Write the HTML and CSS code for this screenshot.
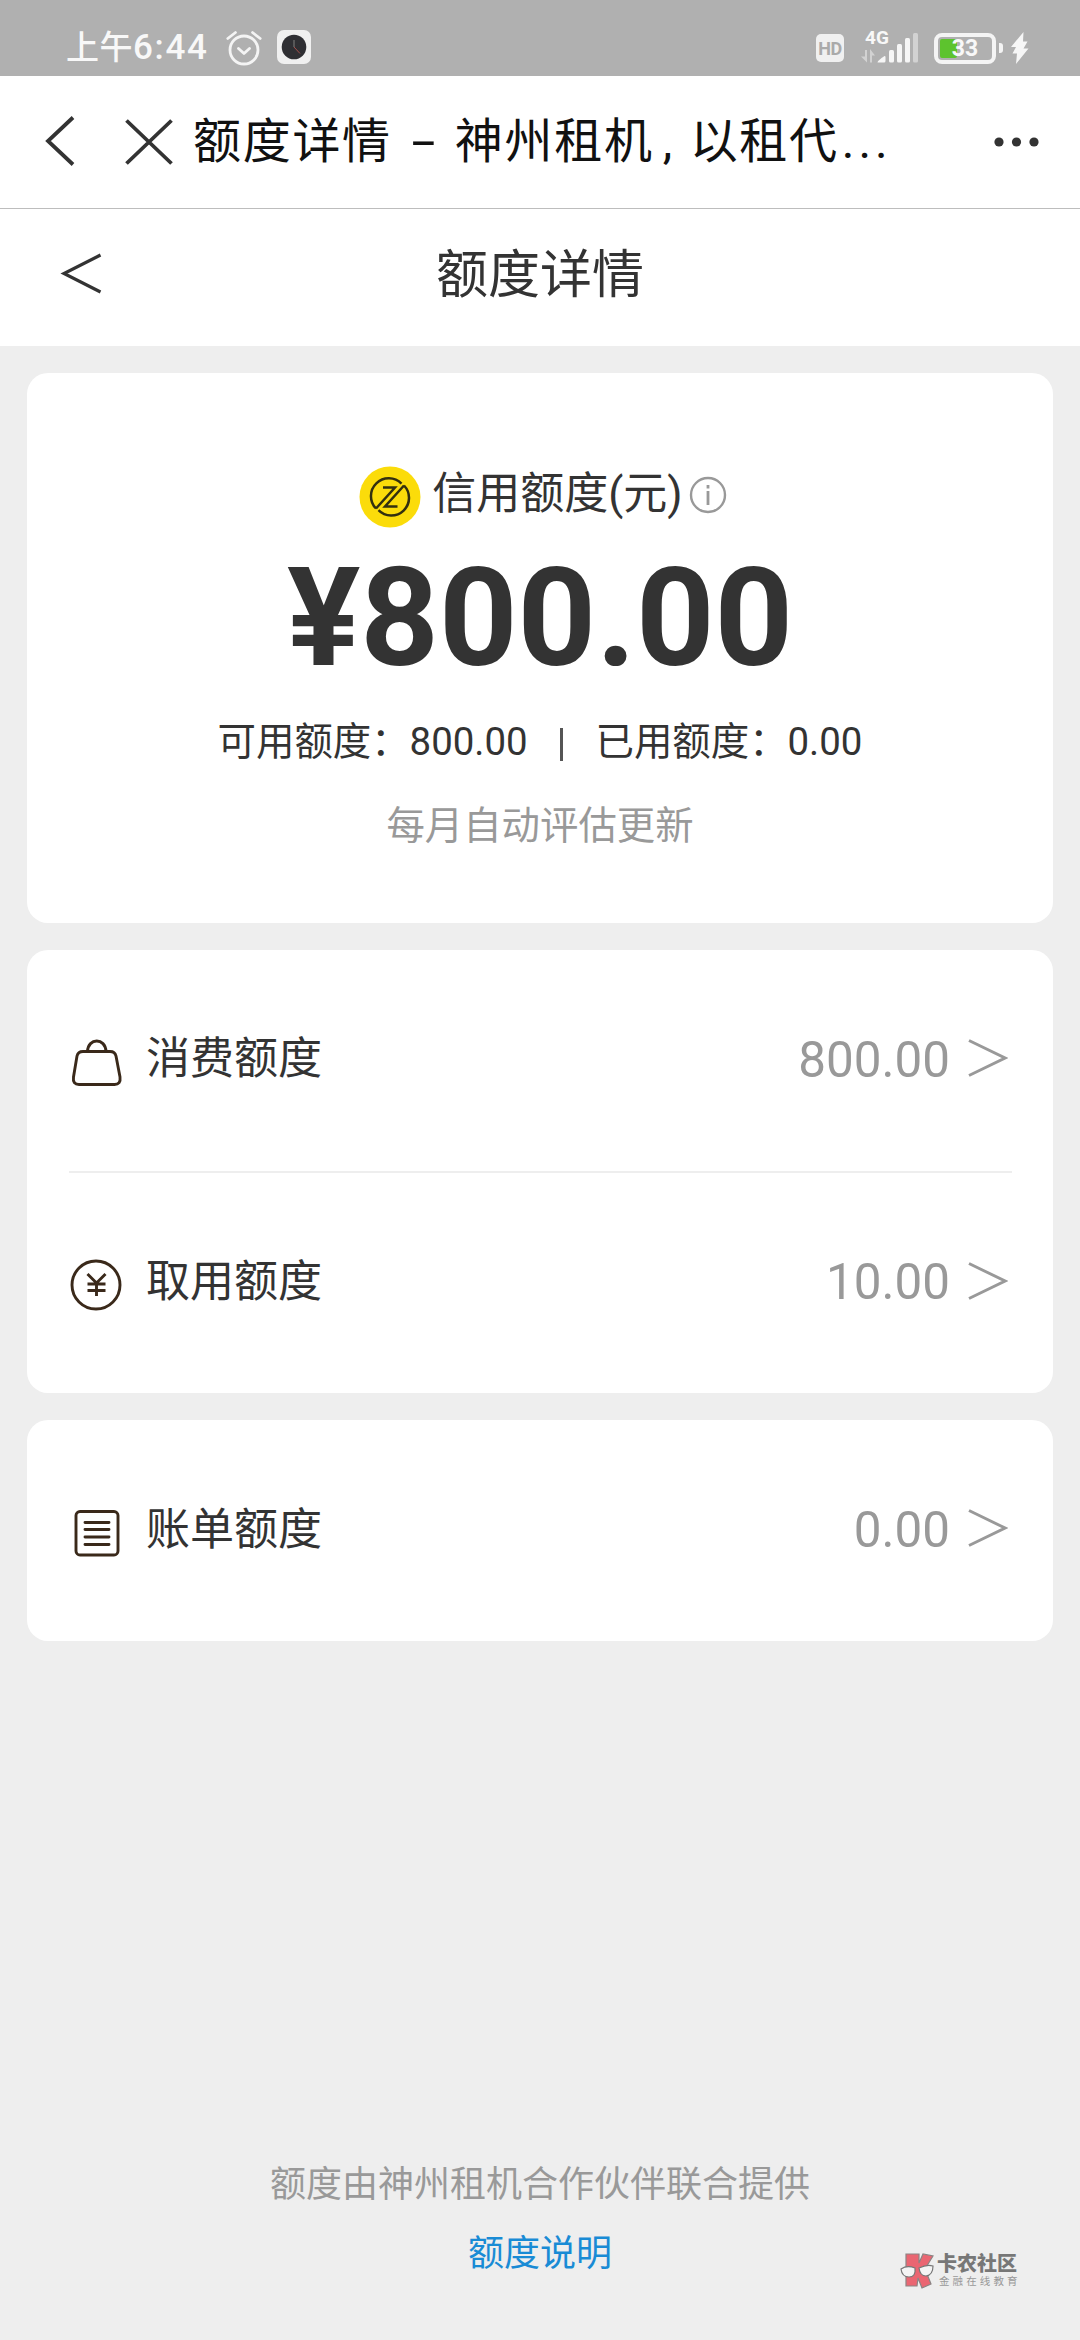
FILE: index.html
```html
<!DOCTYPE html>
<html lang="zh-CN">
<head>
<meta charset="utf-8">
<title>额度详情</title>
<link rel="stylesheet" href="styles.css">
</head>
<body>
<div class="status">
  <div class="status-left">
    <span class="time">上午<span class="digits">6:44</span></span>
    <svg class="alarm" width="36" height="36" viewBox="0 0 36 36" fill="none" stroke="#f4f4f4" stroke-width="2.8" stroke-linecap="round" stroke-linejoin="round"><circle cx="18" cy="20" r="14"/><path d="M1.8 8.5 9.5 2.500M34.200 8.500 26.500 2.500M12.500 18.500l5.500 5 5.500-5"/></svg>
    <svg class="clock" width="34" height="34" viewBox="0 0 34 34"><rect width="34" height="34" rx="7" fill="#f0f0f0"/><circle cx="17" cy="17" r="12.300" fill="#2f2f33"/><path d="M17 10v7" stroke="#666" stroke-width="1.500"/><path d="M17 17l6 6.500" stroke="#a4504c" stroke-width="1"/></svg>
  </div>
  <div class="status-right">
    <span class="hd">HD</span>
    <div class="signal">
      <span class="net">4G</span>
      <svg width="58" height="30" viewBox="0 0 58 30"><g fill="#d2d2d2"><path d="M4 17h2v12.500l-6-6h4zM9 29.500h2v-7h3L9 16z"/><rect x="52" y="0" width="5" height="29.500" rx="1.500"/></g><g fill="#f6f6f6"><path d="M16.500 29.500q0-2 7-6.500 1 0 1 1v4q0 1.500-1.500 1.500z"/><rect x="28" y="17" width="5" height="12.500" rx="1.500"/><rect x="36" y="11" width="5" height="18.500" rx="1.500"/><rect x="44" y="5" width="5" height="24.500" rx="1.500"/></g></svg>
    </div>
    <div class="battery"><span class="charge"></span><span class="level">33</span></div>
    <span class="battery-tip"></span>
    <svg class="bolt" width="18" height="32" viewBox="0 0 18 32"><path d="M12.500 0 0 15h5L1.500 21.500H6L5 32 17.500 16.500h-5L16.500 9.500H12z" fill="#f6f6f6"/></svg>
  </div>
</div>

<div class="titlebar">
  <svg class="nav-back" width="30" height="50" viewBox="0 0 30 50"><path d="M28 1.500 3 25l25 23.500" fill="none" stroke="#333" stroke-width="3.800"/></svg>
  <svg class="nav-close" width="48" height="46" viewBox="0 0 48 46"><path d="M1.500 1.500l45 43M46.500 1.500l-45 43" stroke="#333" stroke-width="3.800"/></svg>
  <span class="page-title">额度详情<span class="dash">-</span>神州租机<span class="comma">,</span>以租代<span class="dots">...</span></span>
  <svg class="more" width="46" height="10" viewBox="0 0 46 10" fill="#333"><circle cx="5" cy="5" r="4.600"/><circle cx="22.500" cy="5" r="4.600"/><circle cx="40" cy="5" r="4.600"/></svg>
</div>

<div class="header">
  <svg width="42" height="42" viewBox="0 0 42 42"><path d="M40.500 2 4 20.500 40.500 39" fill="none" stroke="#333" stroke-width="3.200"/></svg>
  <span class="header-title">额度详情</span>
</div>

<main>
  <section class="card summary">
    <div class="summary-head">
      <svg class="logo" width="62" height="62" viewBox="0 0 62 62"><circle cx="31" cy="31" r="30.500" fill="#fbdc0a"/><g fill="none" stroke="#33300f" stroke-width="2.500"><path d="M17 42.500A17.500 17.500 0 0 1 42.500 17.700M45 19.500A17.500 17.500 0 0 1 19.500 44.200"/><path d="M24 21.500h12L17 42.500M45 19.500 26 40.500h12.500"/></g></svg>
      <span class="summary-label">信用额度(元)</span>
      <svg class="info" width="38" height="38" viewBox="0 0 38 38" fill="none" stroke="#999" stroke-width="2.400"><circle cx="19" cy="19" r="17"/><path d="M19 15v14M19 9v3.500" stroke-width="2.800"/></svg>
    </div>
    <div class="amount">¥800.00</div>
    <div class="split"><span>可用额度：800.00</span><i></i><span>已用额度：0.00</span></div>
    <div class="note">每月自动评估更新</div>
  </section>

  <section class="card">
    <div class="row">
      <svg class="row-icon" width="54" height="54" viewBox="0 0 54 54" fill="none" stroke="#3a291a" stroke-width="2.900"><path d="M13 16.500h27q5 0 6 4.500l4 21q1 7.500-5.500 7.500H9q-6.500 0-5.500-7.500L7 21q1-4.500 6-4.500z"/><path d="M17.500 16.500C18 2.500 35.500 2.500 36 16.500"/></svg>
      <span class="row-label">消费额度</span><span class="row-value">800.00</span>
      <svg class="go" width="40" height="40" viewBox="0 0 40 40"><path d="M1 2.500 37 20 1 37.500" fill="none" stroke="#999" stroke-width="2.900"/></svg>
    </div>
    <div class="row second">
      <svg class="row-icon" width="54" height="54" viewBox="0 0 54 54" fill="none" stroke="#3a291a" stroke-width="2.900"><circle cx="26" cy="27" r="24"/><path d="M17.500 16l9 9 9-9M26.500 25v13M17.500 26h18M17.500 32.500h18"/></svg>
      <span class="row-label">取用额度</span><span class="row-value">10.00</span>
      <svg class="go" width="40" height="40" viewBox="0 0 40 40"><path d="M1 2.500 37 20 1 37.500" fill="none" stroke="#999" stroke-width="2.900"/></svg>
    </div>
  </section>

  <section class="card bill">
    <div class="row">
      <svg class="row-icon" width="54" height="54" viewBox="0 0 54 54" fill="none" stroke="#3a291a" stroke-width="2.900"><rect x="6" y="5.500" width="42" height="43.500" rx="4"/><path d="M15 16.500h24M15 23.500h24M15 31h24M15 38.500h24" stroke-linecap="round"/></svg>
      <span class="row-label">账单额度</span><span class="row-value">0.00</span>
      <svg class="go" width="40" height="40" viewBox="0 0 40 40"><path d="M1 2.500 37 20 1 37.500" fill="none" stroke="#999" stroke-width="2.900"/></svg>
    </div>
  </section>
</main>

<footer>
  <div class="provider">额度由神州租机合作伙伴联合提供</div>
  <div class="explain">额度说明</div>
</footer>

<div class="watermark">
  <svg width="34" height="36" viewBox="0 0 34 36"><path d="M6 1h13v9l4-9 10 2-8 13 6 15-9 4-4-10-1 8H6z" fill="#ea6672" stroke="#8c8484" stroke-width="1.200"/><path d="M1 16q6-4 14-1 1 9-6 9-7 0-8-8zM19 15q8-4 14-2 0 9-7 10-6 0-7-8z" fill="#f4f4f4" stroke="#777" stroke-width="1.200"/></svg>
  <div class="watermark-text"><b>卡农社区</b><span>金融在线教育</span></div>
</div>
</body>
</html>
```

FILE: styles.css
```css
* { box-sizing: border-box; }

body {
  margin: 0;
  width: 1080px;
  height: 2340px;
  display: flex;
  flex-direction: column;
  position: relative;
  overflow: hidden;
  background: #eee;
  color: #333;
  font-family: Roboto, "Noto Sans CJK SC", sans-serif;
  white-space: nowrap;
}

svg { display: block; flex: none; }

.status {
  height: 76px;
  flex: none;
  background: #b0b0b0;
  color: #f8f8f8;
  display: flex;
  justify-content: space-between;
  padding: 0 51px 0 66px;
}
.status-left, .status-right { display: flex; align-items: flex-start; }
.time { font-size: 33px; line-height: 40px; margin-top: 28px; width: 144px; font-weight: 500; letter-spacing: .5px; }
.digits { font-size: 35px; letter-spacing: 1.700px; }
.alarm { margin: 30px 0 0 16px; }
.clock { margin: 30px 0 0 15px; }
.hd { width: 28px; height: 28px; margin-top: 34px; border-radius: 5px; background: #f0f0f0; color: #aaa; font-size: 18px; line-height: 29px; text-align: center; font-weight: 700; letter-spacing: -.5px; }
.signal { width: 58px; margin: 28px 0 0 17px; position: relative; padding-top: 5px; }
.net { position: absolute; left: 4px; top: -1px; font-size: 19px; line-height: 22px; font-weight: 700; }
.battery { width: 62px; height: 31px; margin: 33px 0 0 15px; border: 4px solid #f4f4f4; border-radius: 8px; padding: 2px; position: relative; }
.charge { display: block; width: 17px; height: 19px; border-radius: 2px; background: #5dc32e; }
.level { position: absolute; inset: 0; text-align: center; font-size: 23px; line-height: 24px; font-weight: 700; }
.battery-tip { width: 4px; height: 10px; margin: 43px 0 0 3px; border-radius: 0 3px 3px 0; background: #f4f4f4; }
.bolt { margin: 32px 0 0 8px; }

.titlebar {
  height: 133px;
  flex: none;
  background: #fff;
  border-bottom: 1px solid #bdbdbd;
  display: flex;
  align-items: flex-start;
  padding: 0 40px 0 45px;
}
.nav-back { margin-top: 40px; }
.nav-close { margin: 43px 0 0 50px; }
.page-title { font-size: 48px; line-height: 60px; letter-spacing: 1.7px; color: #111; margin: 36px 0 0 20px; flex: 1; }
.dash, .comma, .dots { display: inline-block; letter-spacing: 0; }
.dash { width: 63px; text-align: center; transform: scaleX(1.8); }
.comma { width: 36px; padding-left: 9px; }
.dots { letter-spacing: 4px; padding-left: 3px; }
.more { margin-top: 61px; }

.header { height: 137px; flex: none; background: #fff; position: relative; display: flex; padding: 0 60px; align-items: flex-start; }
.header svg { margin-top: 44px; }
.header-title { flex: 1; margin: 37px 42px 0 0; text-align: center; font-size: 52px; line-height: 60px; }

main { padding: 27px 27px 0; display: flex; flex-direction: column; gap: 27px; }
.card { background: #fff; border-radius: 21px; }
.summary { height: 550px; display: flex; flex-direction: column; align-items: center; }
.summary-head { display: flex; align-items: flex-start; margin: 92px 0 0 6px; height: 64px; }
.logo { margin-top: 1px; }
.summary-label { font-size: 44px; line-height: 60px; margin: -1px 6px 0 11px; }
.info { margin-top: 11px; }
.amount { font-size: 137px; line-height: 160px; font-weight: 700; margin-top: 9px; }
.split { display: flex; align-items: center; font-size: 38.4px; line-height: 50px; margin-top: 19px; }
.split i { width: 3px; height: 33px; margin: 4px 33px 0 32px; background: #555; }
.note { font-size: 38.4px; line-height: 50px; color: #999; margin-top: 34px; }

.row { height: 221px; display: flex; align-items: flex-start; padding: 0 45px 0 42px; }
.row.second { height: 222px; position: relative; }
.row.second::before { content: ""; position: absolute; left: 42px; right: 41px; top: 0; height: 2px; background: #eee; }
.row-icon { margin: 85px 0 0 1px; }
.second .row-icon { margin-top: 87px; }
.row-label { font-size: 44px; line-height: 60px; margin: 79px auto 0 22px; }
.row-value { font-size: 49.4px; line-height: 60px; margin: 80px 18px 0 0; color: #999; }
.go { margin: 88px 0 0; }
.second .row-label { margin-top: 81px; }
.second .row-value { margin-top: 81px; }
.second .go { margin-top: 90px; }
.bill .row-icon { margin-top: 86px; }
.bill .row-label { margin-top: 80px; }

footer { position: relative; margin-top: auto; padding-bottom: 59px; text-align: center; font-size: 36px; line-height: 54px; }
.provider { color: #999; margin-bottom: 15px; }
.explain { color: #198bd5; }

.watermark { position: absolute; left: 900px; top: 2253px; display: flex; gap: 3px; }
.watermark-text { display: flex; flex-direction: column; color: #777; }
.watermark-text b { font-size: 20px; line-height: 22px; font-weight: 900; }
.watermark-text span { font-size: 10.5px; line-height: 14px; letter-spacing: 3.100px; color: #999; padding-left: 2px; }
```
